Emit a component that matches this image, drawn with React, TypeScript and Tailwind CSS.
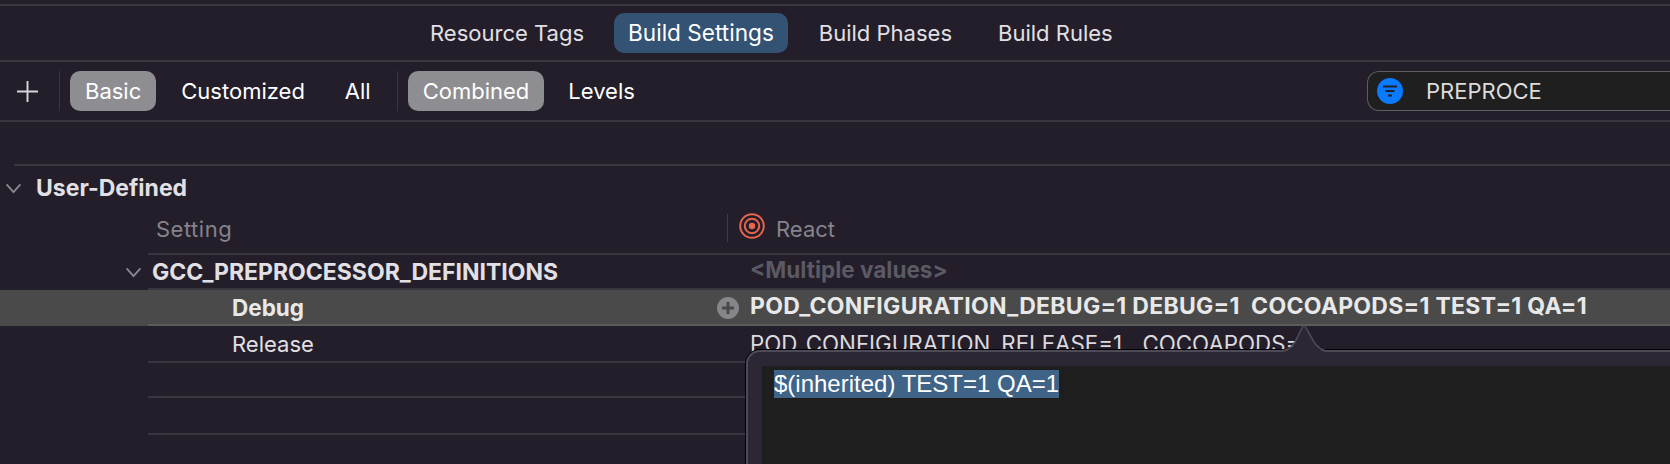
import React from "react";

const Tab = ({ children, active }: { children: React.ReactNode; active?: boolean }) => (
  <div className={`h-10 flex items-center rounded-[10px] px-[14px] ${active ? "bg-[#335274] text-white text-[22.6px]" : "text-[#e2e0e4]"}`}>{children}</div>
);

const Pill = ({ children, active }: { children: React.ReactNode; active?: boolean }) => (
  <div className={`h-10 flex items-center rounded-[10px] ${active ? "px-[15px] bg-[#8e8d91] text-white" : "px-[14px] text-white"}`}>{children}</div>
);

const Chevron = ({ className }: { className: string }) => (
  <svg viewBox="0 0 18 12" className={className} fill="none" stroke="#8a8890" strokeWidth="2">
    <path d="M1.5 1.5 L9 10 L16.5 1.5" />
  </svg>
);

export default function App() {
  return (
    <div className="relative w-[1670px] h-[464px] overflow-hidden bg-[#231e2a] font-['Inter',sans-serif] text-[22px]">
      <div className="h-[4px]" />
      <div className="h-[2px] bg-[#3a3640]" />
      <div className="h-[54px] flex items-center pl-[416px] gap-[1px]">
        <Tab>Resource Tags</Tab>
        <div className="w-[14px]" />
        <Tab active>Build Settings</Tab>
        <div className="w-[15px]" />
        <Tab>Build Phases</Tab>
        <div className="w-[16px]" />
        <Tab>Build Rules</Tab>
      </div>
      <div className="h-[2px] bg-[#3a3640]" />
      <div className="h-[58px] flex items-center relative">
        <svg viewBox="0 0 22 22" className="ml-[17px] w-[21px] h-[21px]" stroke="#d8d6da" strokeWidth="2">
          <path d="M11 0V22M0 11H22" />
        </svg>
        <div className="ml-[21px] w-px h-10 bg-[#3a3640]" />
        <div className="ml-[10px]"><Pill active>Basic</Pill></div>
        <div className="ml-[11px]"><Pill>Customized</Pill></div>
        <div className="ml-[12px]"><Pill>All</Pill></div>
        <div className="ml-[12px] w-px h-10 bg-[#3a3640]" />
        <div className="ml-[10px]"><Pill active>Combined</Pill></div>
        <div className="ml-[10px]"><Pill>Levels</Pill></div>
        <div className="ml-auto h-10 w-[304px] -mr-px flex items-center rounded-l-[12px] border border-r-0 border-[#5e5d60] bg-[#1f1f1f]">
          <div className="ml-[9px] w-[26px] h-[26px] rounded-full bg-[#0a7aff] flex items-center justify-center">
            <svg viewBox="0 0 14 12" className="w-[14px] h-[12px]" fill="none" stroke="#231f2b" strokeWidth="2">
              <path d="M0 1.5H14M2.5 6H11.5M5 10.5H9" />
            </svg>
          </div>
          <span className="ml-[23px] text-[#dcdcdc]">PREPROCE</span>
        </div>
      </div>
      <div className="h-[2px] bg-[#3a3640]" />
      <div className="h-[42px]" />
      <div className="ml-[14px] h-[2px] bg-[#3a3640]" />
      <div className="h-[44px] flex items-center">
        <Chevron className="ml-[5px] w-[17px] h-[11px]" />
        <span className="ml-[14px] font-bold text-[23px] text-[#e2e0e4]">User-Defined</span>
      </div>
      <div className="h-[43px] flex items-center pb-[5px]">
        <span className="ml-[156px] text-[#85838b] tracking-[0.5px]">Setting</span>
        <div className="absolute left-[727px] top-[214px] w-px h-[28px] bg-[#3f3b45]" />
        <svg viewBox="0 0 26 26" className="absolute left-[739px] top-[213px] w-[26px] h-[26px]" fill="none" stroke="#e8654e">
          <circle cx="13" cy="13" r="11.8" strokeWidth="2" />
          <circle cx="13" cy="13" r="7.2" strokeWidth="2" />
          <circle cx="13" cy="13" r="3.2" fill="#e8654e" stroke="none" />
        </svg>
        <span className="absolute left-[776px] text-[#85838b]">React</span>
      </div>
      <div className="ml-[148px] h-[2px] bg-[#3a3640]" />
      <div className="h-[33px] flex items-center pt-[2px]">
        <Chevron className="ml-[125px] w-[17px] h-[11px]" />
        <span className="ml-[10px] font-bold text-[23px] text-[#e2e0e4]">GCC_PREPROCESSOR_DEFINITIONS</span>
        <span className="absolute left-[750px] top-[253px] font-bold text-[22.5px] text-[#5b5963]">&lt;Multiple values&gt;</span>
      </div>
      <div className="ml-[148px] h-[2px] bg-[#3a3640]" />
      <div className="h-[36px] bg-[#4a4a4a] flex items-center relative">
        <span className="ml-[232px] font-bold text-[22.5px] text-[#e8e8e8]">Debug</span>
        <div className="absolute left-[717px] top-[7px] w-[22px] h-[22px] rounded-full bg-[#85858a] flex items-center justify-center">
          <svg viewBox="0 0 12 12" className="w-[12px] h-[12px]" stroke="#4a4a4a" strokeWidth="3"><path d="M6 0V12M0 6H12" /></svg>
        </div>
        <span className="absolute left-[750px] top-[-1px] font-bold text-[23px] tracking-[0.28px] text-[#e8e8e8] whitespace-pre">POD_CONFIGURATION_DEBUG=1 DEBUG=1  COCOAPODS=1 TEST=1 QA=1</span>
        <div className="absolute left-[148px] right-0 bottom-0 h-[2px] bg-[#5c5c5c]" />
      </div>
      <div className="h-[35px] flex items-center">
        <span className="ml-[232px] text-[#e2e0e4] pt-[2px]">Release</span>
        <span className="absolute left-[750px] text-[22.3px] text-[#dcdade] whitespace-pre [word-spacing:4px]">POD_CONFIGURATION_RELEASE=1  COCOAPODS=1</span>
      </div>
      <div className="ml-[148px] h-[2px] bg-[#3a3640]" />
      <div className="h-[33px]" />
      <div className="ml-[148px] h-[2px] bg-[#3a3640]" />
      <div className="h-[35px]" />
      <div className="ml-[148px] h-[2px] bg-[#3a3640]" />

      {/* popover */}
      <div className="absolute left-[746px] top-[350px] right-0 bottom-0 rounded-tl-[14px] border-t-2 border-l-2 border-[#4e4a58] bg-[#2c2635] pl-[14px] pt-[14px] shadow-[0_-1px_0_#000,-1px_0_0_#000]">
        <div className="w-full h-full bg-[#1e1e1e] pl-[12px] pt-[2px]">
          <span className="inline-block h-[28px] leading-[28px] bg-[#406388] text-white font-['Liberation_Sans',sans-serif] text-[24px] whitespace-pre">$(inherited) TEST=1 QA=1</span>
        </div>
      </div>
      <svg viewBox="0 0 60 28" className="absolute left-[1274px] top-[325px] w-[60px] h-[28px]">
        <path d="M0 27 H6 C14 27 17 24 21 18 L28 4 C29 1 31 1 32 4 L40 18 C44 24 48 27 54 27 H60 V29 H0Z" fill="#2c2635" />
        <path d="M0 26 H6 C14 26 17 23 21 17 L28 3 C29 0 31 0 32 3 L40 17 C44 23 48 26 54 26 H60" fill="none" stroke="#4e4a58" strokeWidth="1.6" />
      </svg>
    </div>
  );
}
